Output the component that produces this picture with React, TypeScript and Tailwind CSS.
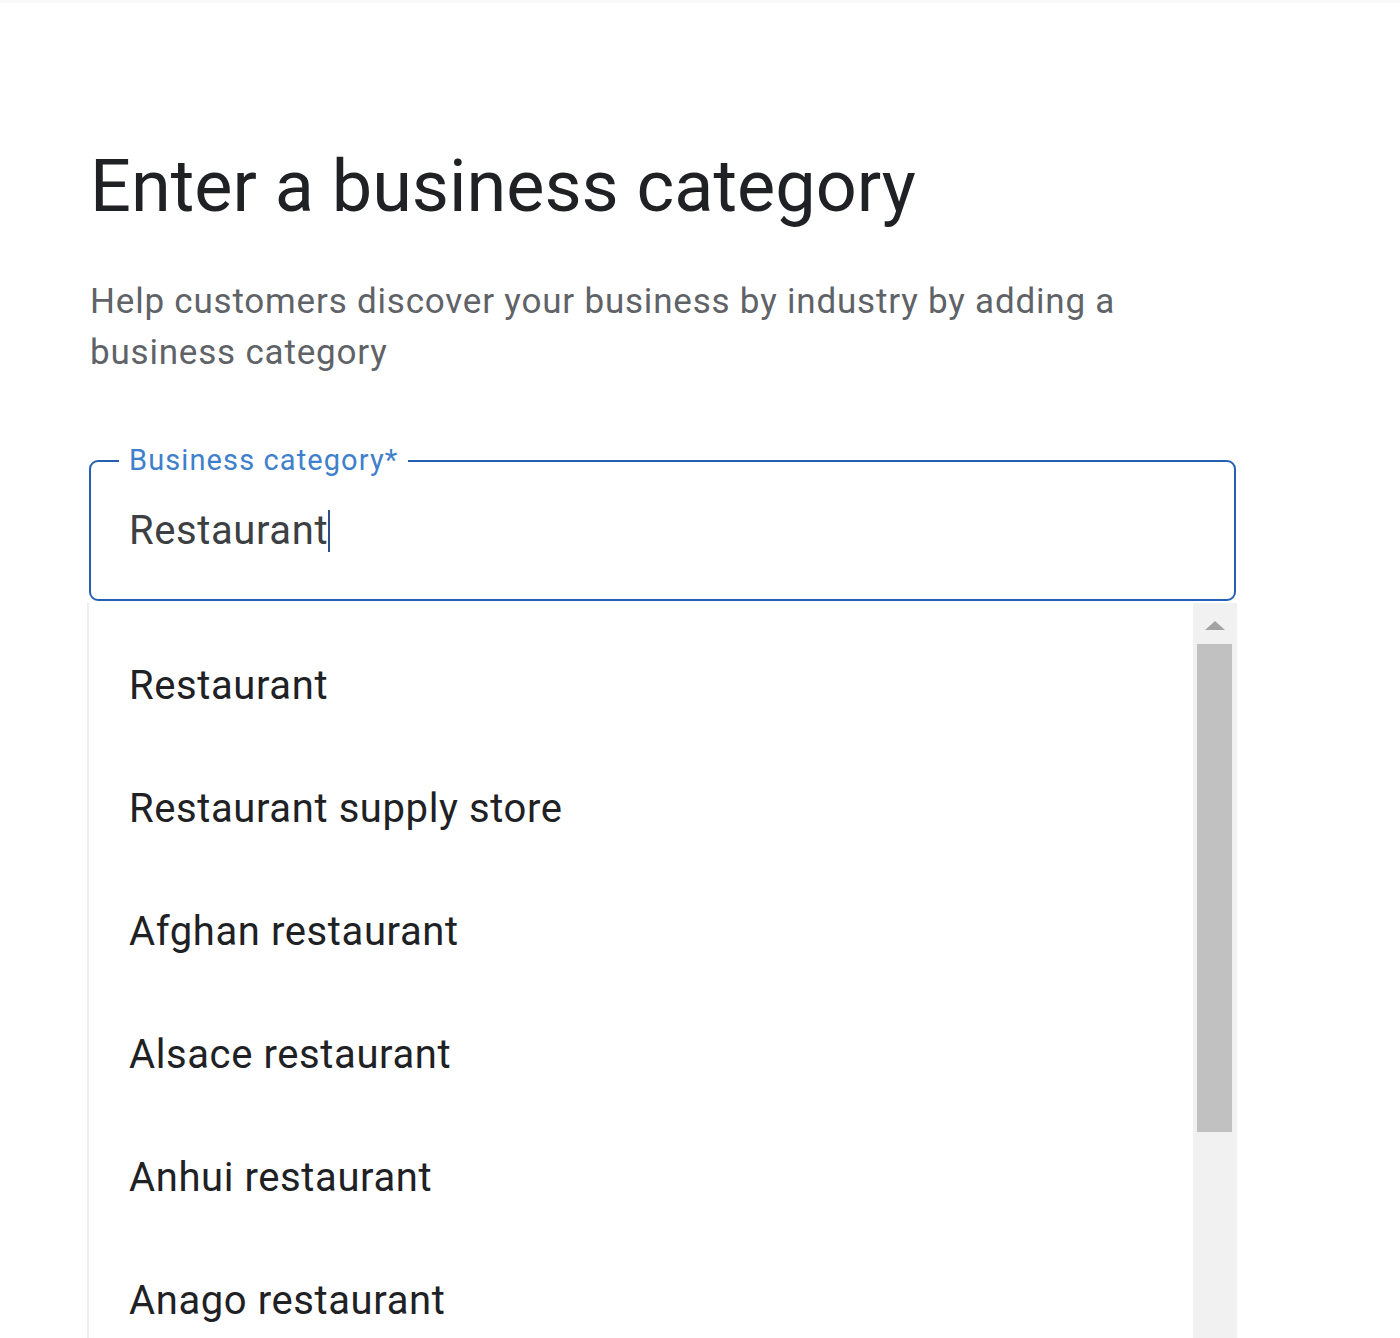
// App.tsx
const options = [
  "Restaurant",
  "Restaurant supply store",
  "Afghan restaurant",
  "Alsace restaurant",
  "Anhui restaurant",
  "Anago restaurant",
];

export default function App() {
  return (
    <div className="h-[1338px] overflow-hidden bg-white border-t-[3px] border-[#f9f9f9] font-['Roboto',sans-serif]">
      <div className="pl-[89px] pt-[144px]">
        <h1 className="pl-[1px] text-[72px] leading-[80px] text-[#202124]">
          Enter a business category
        </h1>
        <p className="mt-[49px] pl-[1px] w-[1100px] text-[35px] leading-[51px] tracking-[0.8px] text-[#5f6368]">
          Help customers discover your business by industry by adding a business category
        </p>

        {/* input field */}
        <div className="relative mt-[82px] w-[1147px] h-[141px] rounded-[9px] border-2 border-[#2560b5] flex items-center pl-[38px]">
          <span className="absolute left-[28px] top-[-16px] px-[10px] bg-white text-[29px] leading-[28px] text-[#3f80cc] tracking-[1.1px]">
            Business category*
          </span>
          <span className="text-[40px] leading-[48px] tracking-[0.6px] text-[#3c4043]">Restaurant</span>
          <span className="inline-block w-[2px] h-[42px] bg-[#2b4f86]" />
        </div>

        <SuggestionList />
      </div>
    </div>
  );
}

const SuggestionList = () => {
  return (
    <div className="ml-[-2px] mt-[2px] w-[1150px] h-[740px] flex border-l-2 border-[#eeeeee] bg-white">
      <ul className="flex-1 pt-[21px]">
        {options.map(option => (
          <li key={option} className="h-[123px] flex items-center pl-[40px] text-[40px] tracking-[0.6px] text-[#202124]">
            {option}
          </li>
        ))}
      </ul>
      <div className="w-[44px] bg-[#f1f1f1] flex flex-col items-center">
        <div className="mt-[18px] w-0 h-0 border-l-[10px] border-r-[10px] border-b-[9px] border-l-transparent border-r-transparent border-b-[#a3a3a3]" />
        <div className="mt-[14px] ml-[-1px] w-[35px] h-[488px] bg-[#c1c1c1]" />
      </div>
    </div>
  );
};
